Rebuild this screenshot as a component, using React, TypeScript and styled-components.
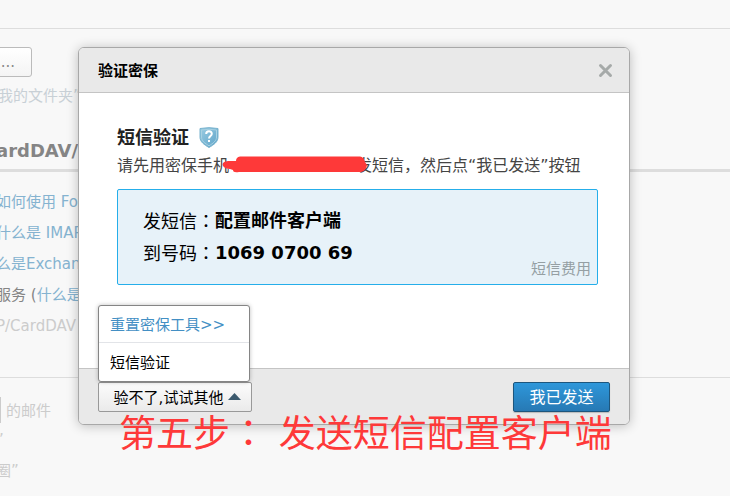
import React from "react";
import styled, { createGlobalStyle } from "styled-components";

const GlobalStyle = createGlobalStyle`
  * { box-sizing: border-box; }
  body {
    margin: 0;
    background: #f8f8f8;
    font-family: "DejaVu Sans", "Noto Sans CJK SC", sans-serif;
    font-size: 15px;
    color: #000;
  }
  button, input { font-family: inherit; }
  a { text-decoration: none; }
`;

const Stage = styled.div`
  position: relative;
  min-height: 100vh;
  overflow: hidden;
`;

const Page = styled.main`
  margin-left: -4px;
  white-space: nowrap;
`;

const TopBar = styled.div`
  height: 29px;
  border-bottom: 1px solid #ddd;
`;

const FolderArea = styled.section`
  padding-top: 18px;
`;

const FolderButton = styled.button`
  display: block;
  height: 30px;
  width: 36px;
  padding: 0 16px 0 0;
  text-align: right;
  border: 1px solid #bbb;
  border-radius: 3px;
  background: linear-gradient(#fff, #f4f4f4);
  color: #888;
  font-size: 15px;
`;

const Hint = styled.p<{ $tone?: string }>`
  margin: 0;
  line-height: 31px;
  color: ${(p) => p.$tone ?? "#ccc"};
`;

const FolderHint = styled(Hint)`
  margin-top: 4px;
  padding-left: 2px;
  color: #c8d0d6;
`;

const SectionTitle = styled.h2`
  margin: 24px 0 0;
  padding-bottom: 3px;
  border-bottom: 3px solid #ddd;
  font-size: 18px;
  line-height: 30px;
  color: #858585;
`;

const HelpList = styled.div`
  padding: 15px 0 35px;
  border-bottom: 1px solid #ddd;
`;

const HelpLink = styled.a`
  color: #85b3d0;
`;

const MailOptions = styled.div`
  padding-top: 16px;
`;

const OptionRow = styled.label`
  display: flex;
  align-items: center;
  gap: 5px;
  height: 31px;
  color: #ccc;
`;

const SmallInput = styled.input`
  width: 5px;
  height: 26px;
  padding: 0;
  border: 1px solid #ccc;
  background: #fff;
`;

const Overlay = styled.div`
  position: absolute;
  inset: 0;
  padding: 47px 100px 0 78px;
`;

const Dialog = styled.section`
  border: 1px solid #a8a8a8;
  border-radius: 6px;
  background: #fff;
  box-shadow: 0 1px 12px rgba(0, 0, 0, 0.24);
`;

const DialogHeader = styled.header`
  display: flex;
  align-items: center;
  justify-content: space-between;
  height: 45px;
  padding: 0 16px 2px 19px;
  border-bottom: 1px solid #c4c4c4;
  border-radius: 5px 5px 0 0;
  background: #e9e9e9;
`;

const DialogTitle = styled.h1`
  margin: 0;
  font-size: 15px;
`;

const CloseButton = styled.button`
  display: flex;
  padding: 2px 0 0;
  border: 0;
  background: none;
`;

const DialogBody = styled.div`
  height: 275px;
  padding: 31px 31px 0 38px;
`;

const MethodTitle = styled.h2`
  display: flex;
  align-items: center;
  gap: 9px;
  margin: 0;
  font-size: 18px;
  line-height: 28px;
  color: #222;
`;

const Instruction = styled.p`
  margin: 0 0 9px;
  font-size: 16px;
  line-height: 28px;
  color: #444;
  white-space: nowrap;
`;

const HiddenNumber = styled.span`
  position: relative;
  display: inline-block;
  width: 127px;
  height: 18px;
  vertical-align: middle;

  svg {
    position: absolute;
    left: -7px;
    top: -2px;
  }
`;

const SmsBox = styled.div`
  display: flex;
  justify-content: space-between;
  align-items: flex-end;
  height: 96px;
  padding: 0 6px 0 25px;
  border: 1px solid #25aeea;
  border-radius: 2px;
  background: #e7f2f9;
`;

const SmsDetails = styled.dl`
  align-self: center;
  display: grid;
  grid-template-columns: auto auto;
  margin: 0;
  font-size: 18px;
  line-height: 31px;
  white-space: nowrap;

  dt { margin: 0; }
  dd { margin: 0; font-weight: 700; }
`;

const Colon = styled.span`
  font-family: "Noto Sans CJK TC", sans-serif;
`;

const FeeLink = styled.a`
  line-height: 30px;
  color: #959fa3;
`;

const DialogFooter = styled.footer`
  display: flex;
  justify-content: space-between;
  align-items: flex-start;
  height: 56px;
  padding: 13px 19px 0;
  border-top: 1px solid #c4c4c4;
  border-radius: 0 0 5px 5px;
  background: #e9e9e9;
`;

const OtherMethods = styled.div`
  position: relative;
`;

const MethodsMenu = styled.div`
  position: absolute;
  left: 0;
  bottom: 100%;
  width: 152px;
  border: 1px solid #858585;
  border-radius: 3px;
  background: #fff;
  box-shadow: 0 0 4px rgba(0, 0, 0, 0.25);
`;

const MenuLink = styled.a`
  display: block;
  padding: 3px 11px 0;
  line-height: 33px;
  color: #438fc4;
  white-space: nowrap;

  & + & {
    padding-top: 2px;
    border-top: 1px solid #e2e4e8;
    line-height: 36px;
    color: #000;
  }
`;

const MethodsButton = styled.button`
  display: flex;
  align-items: center;
  justify-content: center;
  gap: 5px;
  width: 154px;
  height: 30px;
  padding: 0 5px 2px 10px;
  border: 1px solid #999;
  border-radius: 2px;
  background: linear-gradient(#fcfcfc, #eaeaea);
  font-size: 15px;
  color: #000;
  white-space: nowrap;
`;

const SentButton = styled.button`
  width: 97px;
  height: 30px;
  padding: 0 0 2px;
  border: 1px solid #1d567d;
  border-radius: 2px;
  background: linear-gradient(#2e97da, #2779b4);
  box-shadow: 0 1px 1px rgba(0, 0, 0, 0.2);
  font-size: 16px;
  color: #fff;
`;

const StepCaption = styled.p`
  position: absolute;
  left: 119px;
  top: 406px;
  margin: 0;
  font-size: 37px;
  line-height: 50px;
  color: #fe3939;
  white-space: nowrap;
`;

const CloseIcon = () => (
  <svg width="16" height="16" viewBox="0 0 16 16">
    <path d="M3.5 3.5L13.5 13.5M13.5 3.5L3.5 13.5" stroke="#a6aaa9" strokeWidth="3" strokeLinecap="round" />
  </svg>
);

const ShieldIcon = () => (
  <svg width="22" height="22" viewBox="0 0 22 22">
    <defs>
      <linearGradient id="shield" x1="0" y1="0" x2="1" y2="1">
        <stop offset="0" stopColor="#9acce2" />
        <stop offset="1" stopColor="#5da3c8" />
      </linearGradient>
    </defs>
    <path
      d="M2 1.5Q11 -0.2 20 1.5V10C20 15 16 17.5 11 20.5C6 17.5 2 15 2 10Z"
      fill="url(#shield)"
      stroke="#79b3ce"
    />
    <path
      d="M3.5 3Q11 1.5 18.5 3V10C18.5 14 15 16.2 11 18.8C7 16.2 3.5 14 3.5 10Z"
      fill="none"
      stroke="#a8d1e2"
    />
    <path
      d="M8.2 7C8.2 3.4 13.8 3.4 13.8 6.8C13.8 9 11 9 11 11.5"
      fill="none"
      stroke="#fff"
      strokeWidth="2"
    />
    <rect x="10" y="13" width="2" height="2" fill="#fff" />
  </svg>
);

const RedMark = () => (
  <svg width="145" height="17" viewBox="0 0 145 17">
    <path
      d="M18 0.5H138Q142 1 143 6L145 9Q144 15 139 16H17Q11 17 11 14L8 13Q3 13 1 10Q-1 6 6 5H14Q14 1 18 0.5Z"
      fill="#fe3939"
    />
  </svg>
);

const UpArrow = () => (
  <svg width="13" height="7" viewBox="0 0 13 7">
    <path d="M0 7L6.5 0L13 7Z" fill="#3c5a6e" />
  </svg>
);

export default function App() {
  return (
    <Stage>
      <GlobalStyle />
      <Page>
        <TopBar />
        <FolderArea>
          <FolderButton type="button">...</FolderButton>
          <FolderHint>我的文件夹”</FolderHint>
        </FolderArea>
        <SectionTitle>ardDAV/</SectionTitle>
        <HelpList>
          <Hint><HelpLink href="#">如何使用 Fo</HelpLink></Hint>
          <Hint><HelpLink href="#">什么是 IMAP</HelpLink></Hint>
          <Hint><HelpLink href="#">么是Exchan</HelpLink></Hint>
          <Hint $tone="#858585">服务 (<HelpLink href="#">什么是</HelpLink></Hint>
          <Hint>P/CardDAV</Hint>
        </HelpList>
        <MailOptions>
          <OptionRow><SmallInput type="text" />的邮件</OptionRow>
          <Hint>”</Hint>
          <Hint>圈”</Hint>
        </MailOptions>
      </Page>
      <Overlay>
        <Dialog role="dialog" aria-labelledby="dialog-title">
          <DialogHeader>
            <DialogTitle id="dialog-title">验证密保</DialogTitle>
            <CloseButton type="button" aria-label="关闭"><CloseIcon /></CloseButton>
          </DialogHeader>
          <DialogBody>
            <MethodTitle>短信验证<ShieldIcon /></MethodTitle>
            <Instruction>
              请先用密保手机<HiddenNumber><RedMark /></HiddenNumber>发短信，然后点“我已发送”按钮
            </Instruction>
            <SmsBox>
              <SmsDetails>
                <dt>发短信<Colon>：</Colon></dt>
                <dd>配置邮件客户端</dd>
                <dt>到号码<Colon>：</Colon></dt>
                <dd>1069 0700 69</dd>
              </SmsDetails>
              <FeeLink href="#">短信费用</FeeLink>
            </SmsBox>
          </DialogBody>
          <DialogFooter>
            <OtherMethods>
              <MethodsMenu>
                <MenuLink href="#">重置密保工具&gt;&gt;</MenuLink>
                <MenuLink href="#">短信验证</MenuLink>
              </MethodsMenu>
              <MethodsButton type="button">验不了,试试其他<UpArrow /></MethodsButton>
            </OtherMethods>
            <SentButton type="button">我已发送</SentButton>
          </DialogFooter>
        </Dialog>
      </Overlay>
      <StepCaption>第五步<Colon>：</Colon> 发送短信配置客户端</StepCaption>
    </Stage>
  );
}
